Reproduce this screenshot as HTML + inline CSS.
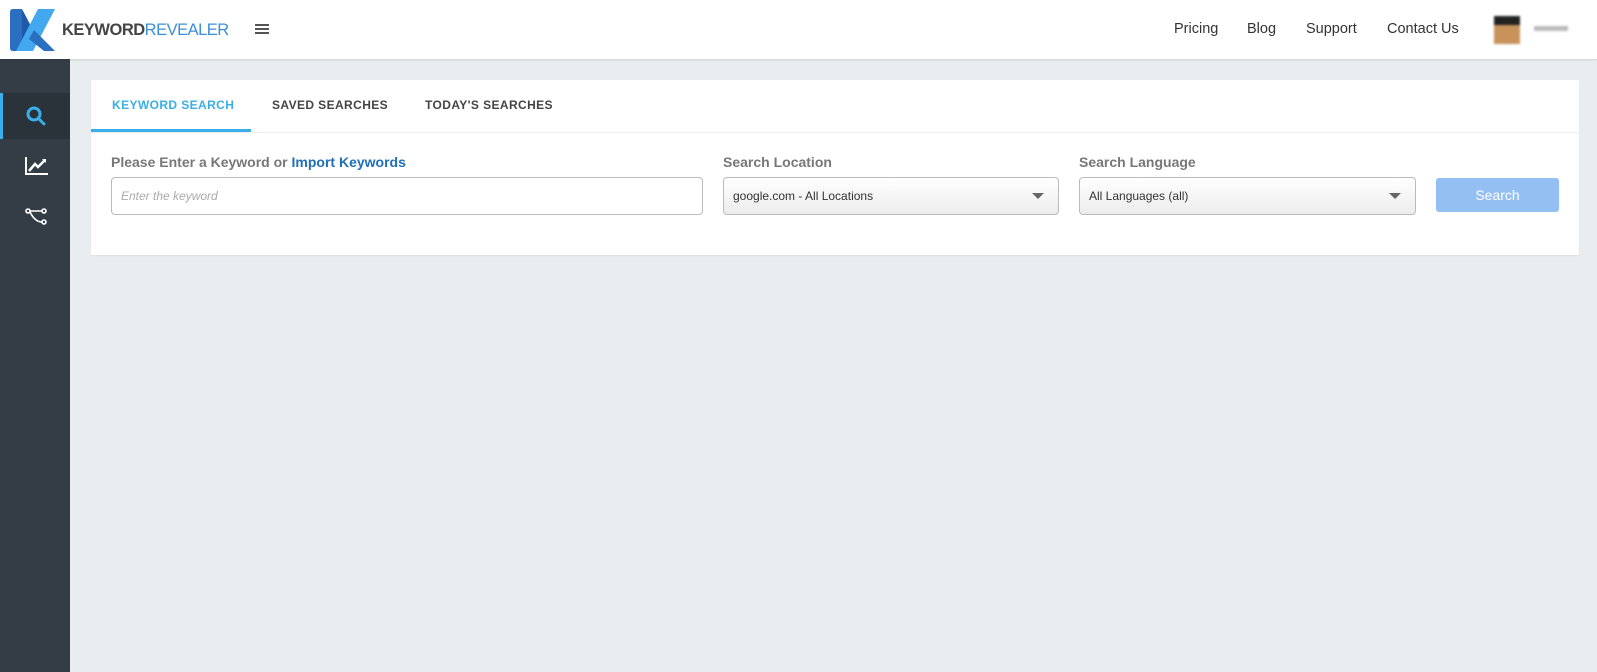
<!DOCTYPE html>
<html><head><style>
*{box-sizing:border-box;margin:0;padding:0}
body{width:1597px;height:672px;background:#e9edf0;font-family:"Liberation Sans",sans-serif;position:relative;overflow:hidden}
.hdr{position:absolute;left:0;top:0;width:1597px;height:59px;background:#fff;box-shadow:0 1px 2px rgba(0,0,0,.12);z-index:2}
.side{position:absolute;left:0;top:59px;width:70px;height:613px;background:#343d46}
.act{position:absolute;left:0;top:34px;width:70px;height:46px;background:#2a323a;border-left:3px solid #3aaee8}
.card{position:absolute;left:91px;top:80px;width:1488px;height:175px;background:#fff;box-shadow:0 1px 1px rgba(0,0,0,.06)}
.tab{position:absolute;top:18px;font-size:12px;font-weight:bold;letter-spacing:.4px;color:#444}
.lbl{position:absolute;top:74px;font-size:14px;font-weight:bold;color:#777}
.box{position:absolute;top:97px;height:38px;border:1px solid #bbb;border-radius:4px;font-size:12px;color:#333;padding:11px 9px}
.sel{background:linear-gradient(#fff,#ececec)}
.arr{position:absolute;right:14px;top:15px;border-left:6px solid transparent;border-right:6px solid transparent;border-top:6px solid #666}
.nav{position:absolute;top:21px;font-size:14.5px;color:#333}
</style></head><body>
<div class="hdr">
<svg style="position:absolute;left:10px;top:9px" width="46" height="42" viewBox="0 0 46 42"><path d="M0 3 Q0 0 3 0 L12 0 L12 42 L3 42 Q0 42 0 39Z" fill="#2a6fc0"/><path d="M12 0 L23 21 L12 42Z" fill="#1e5aa8"/><path d="M28 0 L45 0 L23 42 L6 42Z" fill="#42a8f0"/><path d="M24 21 L45 42 L34 42 L19 30Z" fill="#2a6fc0"/></svg>
<div style="position:absolute;left:62px;top:21px;font-size:16.5px;letter-spacing:-.5px"><b style="color:#444">KEYWORD</b><span style="color:#3d8fd6">REVEALER</span></div>
<div style="position:absolute;left:255px;top:24px;width:14px;height:2px;background:#555;box-shadow:0 4px 0 #555,0 8px 0 #555"></div>
<div class="nav" style="left:1174px">Pricing</div>
<div class="nav" style="left:1247px">Blog</div>
<div class="nav" style="left:1306px">Support</div>
<div class="nav" style="left:1387px">Contact Us</div>
<div style="position:absolute;left:1494px;top:16px;width:26px;height:28px;background:#c8925a;border-top:9px solid #222;filter:blur(1px)"></div>
<div style="position:absolute;left:1534px;top:26px;width:34px;height:5px;background:#bbb;filter:blur(1px)"></div>
</div>
<div class="side"><div class="act"></div>
<svg style="position:absolute;left:26px;top:47px" width="20" height="20" viewBox="0 0 20 20"><circle cx="8" cy="8" r="6" fill="none" stroke="#3aaee8" stroke-width="3"/><path d="M12.5 12.5L18 18" stroke="#3aaee8" stroke-width="3" stroke-linecap="round"/></svg>
<svg style="position:absolute;left:25px;top:97px" width="24" height="20" viewBox="0 0 24 20"><path d="M1 1V18H23" fill="none" stroke="#fff" stroke-width="2"/><path d="M4 15L10 8L13 11L20 4" fill="none" stroke="#fff" stroke-width="2.5"/><path d="M17 3H21V7Z" fill="#fff"/></svg>
<svg style="position:absolute;left:25px;top:148px" width="24" height="20" viewBox="0 0 24 20"><circle cx="3" cy="4" r="2" fill="none" stroke="#fff" stroke-width="1.6"/><circle cx="19" cy="4" r="2" fill="none" stroke="#fff" stroke-width="1.6"/><circle cx="19" cy="15" r="2" fill="none" stroke="#fff" stroke-width="1.6"/><path d="M5 4H17M5 5Q10 15 17 15" fill="none" stroke="#fff" stroke-width="1.6"/></svg>
</div>
<div class="card">
<div class="tab" style="left:21px;color:#3aaee8">KEYWORD SEARCH</div>
<div style="position:absolute;left:0;top:49px;width:160px;height:3px;background:#3aaee8"></div>
<div class="tab" style="left:181px">SAVED SEARCHES</div>
<div class="tab" style="left:334px">TODAY'S SEARCHES</div>
<div style="position:absolute;left:0;top:52px;width:1488px;height:1px;background:#eee"></div>
<div class="lbl" style="left:20px">Please Enter a Keyword or <span style="color:#1f6fb8">Import Keywords</span></div>
<div class="box" style="left:20px;width:592px;color:#aaa;font-style:italic">Enter the keyword</div>
<div class="lbl" style="left:632px">Search Location</div>
<div class="box sel" style="left:632px;width:336px">google.com - All Locations<div class="arr"></div></div>
<div class="lbl" style="left:988px">Search Language</div>
<div class="box sel" style="left:988px;width:337px">All Languages (all)<div class="arr"></div></div>
<div style="position:absolute;left:1345px;top:98px;width:123px;height:34px;background:#94bff3;border-radius:3px;color:#fff;font-size:14px;text-align:center;line-height:34px">Search</div>
</div>
</body></html>
